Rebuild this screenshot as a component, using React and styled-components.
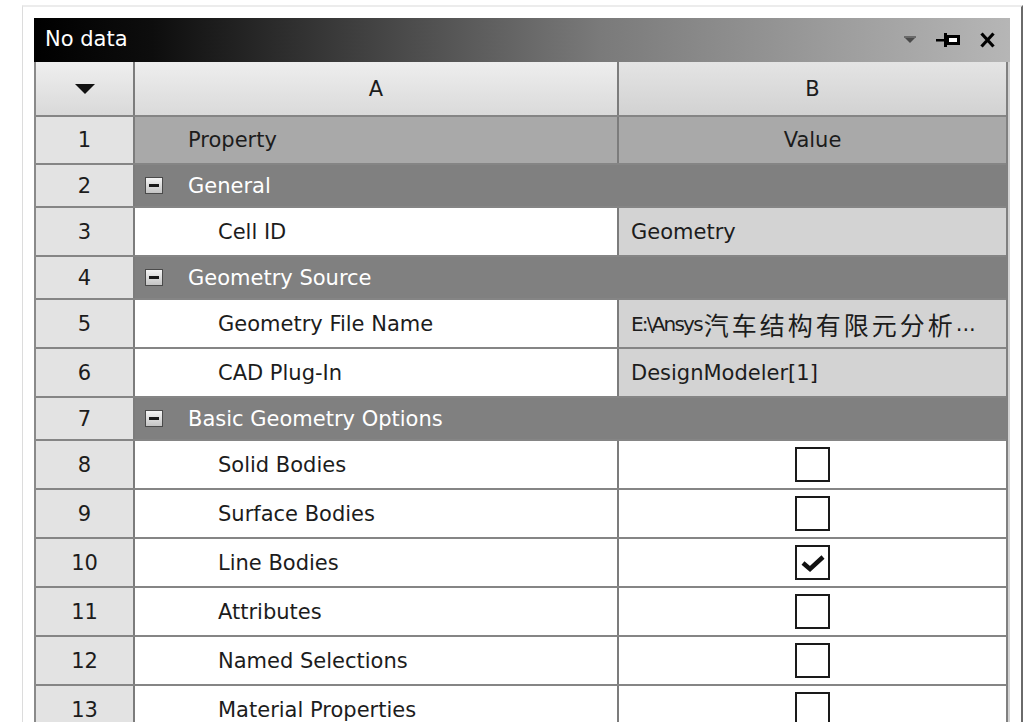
import React from "react";
import styled, { createGlobalStyle } from "styled-components";

const Global = createGlobalStyle`
  html, body { margin: 0; padding: 0; background: #fff; height: 722px; overflow: hidden; }
  * { box-sizing: border-box; }
  body { font-family: "DejaVu Sans", "Noto Sans CJK SC", sans-serif; }
`;

const Frame = styled.div`
  margin: 5px 0 0 22px;
  width: 1001px;
  height: 717px;
  border-left: 1px solid #dcdcdc;
  border-top: 2px solid #ececec;
  border-right: 2px solid #6a6a6a;
  padding: 11px 11px 0 11px;
  overflow: hidden;
`;

const Panel = styled.div`
  width: 976px;
  background: #d2d2d2;
`;

const TitleBar = styled.div`
  height: 44px;
  display: flex;
  align-items: center;
  padding: 0 15px 0 11px;
  background: linear-gradient(to right, #000 0%, #0d0d0d 12%, #7a7a7a 58%, #b6b6b6 100%);
  color: #fff;
  font-size: 21px;
`;

const TitleText = styled.span`
  flex: 1;
  padding-bottom: 2px;
`;

const TitleIcons = styled.div`
  display: flex;
  align-items: center;
  gap: 20px;
`;

const Table = styled.div`
  width: 974px;
  border-left: 2px solid #8a8a8a;
  border-right: 2px solid #808080;
  font-size: 21px;
  color: #1c1c1c;
`;

const Row = styled.div`
  display: flex;
  height: ${(p) => p.$h}px;
  border-bottom: 2px solid #858585;
`;

const NumCell = styled.div`
  flex: 0 0 99px;
  border-right: 2px solid #7c7c7c;
  background: ${(p) => (p.$header ? "linear-gradient(#efefef, #d9d9d9)" : "#e3e3e3")};
  display: flex;
  align-items: center;
  justify-content: center;
`;

const CellA = styled.div`
  flex: 0 0 484px;
  border-right: 2px solid #7c7c7c;
  display: flex;
  align-items: center;
  justify-content: ${(p) => (p.$center ? "center" : "flex-start")};
  padding-left: ${(p) => p.$indent || 0}px;
  background: ${(p) => p.$bg};
`;

const CellB = styled.div`
  flex: 1;
  display: flex;
  align-items: center;
  justify-content: ${(p) => (p.$center ? "center" : "flex-start")};
  padding-left: ${(p) => (p.$center ? 0 : 12)}px;
  background: ${(p) => p.$bg};
  white-space: nowrap;
  overflow: hidden;
`;

const SectionCell = styled.div`
  flex: 1;
  display: flex;
  align-items: center;
  padding-left: 10px;
  background: #808080;
  color: #fff;
`;

const MinusBox = styled.span`
  width: 18px;
  height: 17px;
  border: 1px solid #4a4a4a;
  background: linear-gradient(#f4f4f4, #c4c4c4);
  display: flex;
  align-items: center;
  justify-content: center;
  margin-right: 25px;
  &::after {
    content: "";
    width: 10px;
    height: 3px;
    background: #1a1a1a;
  }
`;

const Checkbox = styled.span`
  width: 35px;
  height: 35px;
  border: 2px solid #1a1a1a;
  background: #fff;
  display: flex;
  align-items: center;
  justify-content: center;
`;

const Narrow = styled.span`
  letter-spacing: -1.8px;
  font-size: 20px;
`;

const Cjk = styled.span`
  font-family: "Noto Sans CJK SC", sans-serif;
  font-size: 25px;
  letter-spacing: 3px;
  margin-left: 2px;
`;

const HeaderArrow = () => (
  <svg width="20" height="10" viewBox="0 0 20 10">
    <polygon points="0,0 20,0 10,10" fill="#111" />
  </svg>
);

const DropIcon = () => (
  <svg width="12" height="8" viewBox="0 0 12 8">
    <rect x="0" y="0" width="12" height="2" fill="#6a6a6a" />
    <polygon points="1,2 11,2 6,7" fill="#4a4a4a" />
  </svg>
);

const PinIcon = () => (
  <svg width="24" height="14" viewBox="0 0 24 14">
    <rect x="0" y="6" width="10" height="2.5" fill="#000" />
    <rect x="8" y="0" width="3" height="14" fill="#000" />
    <rect x="10" y="2" width="14" height="10" fill="#000" />
    <rect x="13" y="5" width="8" height="4" fill="#fff" />
  </svg>
);

const CloseIcon = () => (
  <svg width="15" height="16" viewBox="0 0 15 16">
    <path d="M1.5 1.5 L13.5 14.5 M13.5 1.5 L1.5 14.5" stroke="#000" strokeWidth="3.2" />
  </svg>
);

const CheckMark = () => (
  <svg width="26" height="20" viewBox="0 0 26 20">
    <path d="M3 10 L10 16 L23 4" stroke="#111" strokeWidth="4.5" fill="none" strokeLinejoin="miter" />
  </svg>
);

const rows = [
  { type: "section", n: 2, label: "General" },
  { type: "text", n: 3, label: "Cell ID", value: "Geometry" },
  { type: "section", n: 4, label: "Geometry Source" },
  { type: "path", n: 5, label: "Geometry File Name" },
  { type: "text", n: 6, label: "CAD Plug-In", value: "DesignModeler[1]" },
  { type: "section", n: 7, label: "Basic Geometry Options" },
  { type: "check", n: 8, label: "Solid Bodies", checked: false },
  { type: "check", n: 9, label: "Surface Bodies", checked: false },
  { type: "check", n: 10, label: "Line Bodies", checked: true },
  { type: "check", n: 11, label: "Attributes", checked: false },
  { type: "check", n: 12, label: "Named Selections", checked: false },
  { type: "check", n: 13, label: "Material Properties", checked: false },
];

export default function App() {
  return (
    <>
      <Global />
      <Frame>
        <Panel>
          <TitleBar>
            <TitleText>No data</TitleText>
            <TitleIcons>
              <DropIcon />
              <PinIcon />
              <CloseIcon />
            </TitleIcons>
          </TitleBar>
          <Table>
            <Row $h={55}>
              <NumCell $header>
                <HeaderArrow />
              </NumCell>
              <CellA $center $bg="linear-gradient(#eeeeee, #dadada)">A</CellA>
              <CellB $center $bg="linear-gradient(#e4e4e4, #d2d2d2)">B</CellB>
            </Row>
            <Row $h={48}>
              <NumCell>1</NumCell>
              <CellA $indent={53} $bg="#a9a9a9">Property</CellA>
              <CellB $center $bg="#a9a9a9">Value</CellB>
            </Row>
            {rows.map((r) => {
              if (r.type === "section") {
                return (
                  <Row key={r.n} $h={43}>
                    <NumCell>{r.n}</NumCell>
                    <SectionCell>
                      <MinusBox />
                      {r.label}
                    </SectionCell>
                  </Row>
                );
              }
              return (
                <Row key={r.n} $h={49}>
                  <NumCell>{r.n}</NumCell>
                  <CellA $indent={83} $bg="#fff">{r.label}</CellA>
                  {r.type === "text" && <CellB $bg="#d3d3d3">{r.value}</CellB>}
                  {r.type === "path" && (
                    <CellB $bg="#d3d3d3">
                      <Narrow>E:\Ansys</Narrow>
                      <Cjk>汽车结构有限元分析</Cjk>...
                    </CellB>
                  )}
                  {r.type === "check" && (
                    <CellB $center $bg="#fff">
                      <Checkbox>{r.checked && <CheckMark />}</Checkbox>
                    </CellB>
                  )}
                </Row>
              );
            })}
          </Table>
        </Panel>
      </Frame>
    </>
  );
}
